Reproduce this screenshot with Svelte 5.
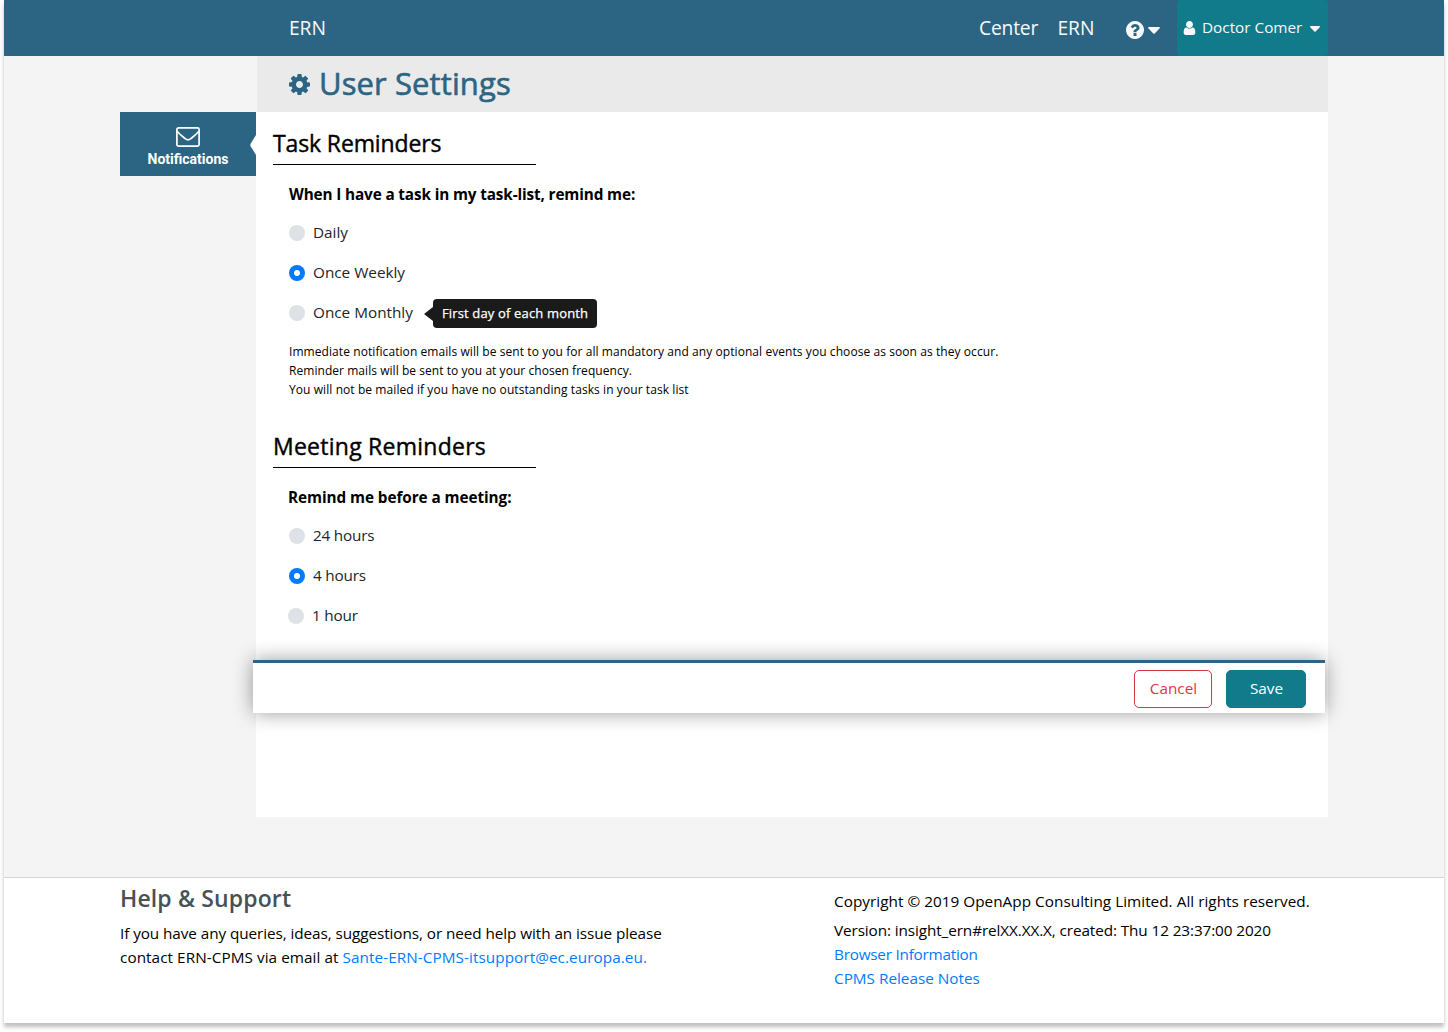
<script>
  let reminder = $state('Once Weekly');
  let meeting = $state('4 hours');
  const reminders = ['Daily', 'Once Weekly', 'Once Monthly'];
  const meetings = ['24 hours', '4 hours', '1 hour'];
</script>

{#snippet caret()}
  <svg class="caret" viewBox="0 0 12 7"><path d="M.9 0h10.2c.8 0 1.1.8.6 1.3L6.7 6.5c-.4.4-1 .4-1.4 0L.3 1.3C-.2.8.1 0 .9 0z" /></svg>
{/snippet}

<div class="page">
  <header>
    <span class="brand">ERN</span>
    <nav>
      <span class="center">Center</span>
      <span class="ern">ERN</span>
      <span class="help">
        <svg class="question" viewBox="0 128 1536 1536"><path d="M896 1376v-192q0-14-9-23t-23-9h-192q-14 0-23 9t-9 23v192q0 14 9 23t23 9h192q14 0 23-9t9-23zm256-672q0-88-55.5-163t-138.5-116-170-41q-243 0-371 213-15 24 8 42l132 100q7 6 19 6 16 0 25-12 53-68 86-92 34-24 86-24 48 0 85.5 26t37.5 59q0 38-20 61t-68 45q-63 28-115.5 86.5t-52.5 125.5v36q0 14 9 23t23 9h192q14 0 23-9t9-23q0-19 21.5-49.5t54.5-49.5q32-18 49-28.5t46-35 44.5-48 28-60.5 12.5-81zm384 192q0 209-103 385.5t-279.5 279.5-385.5 103-385.5-103-279.5-279.5-103-385.5 103-385.5 279.5-279.5 385.5-103 385.5 103 279.5 279.5 103 385.5z" /></svg>
        {@render caret()}
      </span>
      <span class="account">
        <svg class="user" viewBox="0 128 1280 1536"><path d="M1280 1399q0 109-62.5 187t-150.5 78h-854q-88 0-150.5-78t-62.5-187q0-85 8.5-160.5t31.5-152 58.5-131 94-89 134.5-34.5q131 128 313 128t313-128q76 0 134.5 34.5t94 89 58.5 131 31.5 152 8.5 160.5zm-256-887q0 159-112.5 271.5t-271.5 112.5-271.5-112.5-112.5-271.5 112.5-271.5 271.5-112.5 271.5 112.5 112.5 271.5z" /></svg>
        <span class="name">Doctor Comer</span>
        {@render caret()}
      </span>
    </nav>
  </header>

  <div class="body">
    <aside>
      <div class="tab">
        <svg class="envelope" viewBox="0 0 24 20"><rect x=".9" y=".9" width="22.2" height="18.2" rx="1.6" /><path d="M1 4.3c2.600 2.900 5.500 5.200 8.200 7.400 1.900 1.600 3.700 1.600 5.600 0 2.700-2.200 5.600-4.500 8.200-7.400" /></svg>
        <span class="tab-label">Notifications</span>
        <svg class="notch" viewBox="0 0 6 20"><path d="M6 0v20L.6 11.200q-.6-1.200 0-2.400z" /></svg>
      </div>
    </aside>
    <div class="column">
      <div class="title">
        <svg class="cog" viewBox="0 128 1536 1536"><path d="M1024 896q0-106-75-181t-181-75-181 75-75 181 75 181 181 75 181-75 75-181zm512-109v222q0 12-8 23t-20 13l-185 28q-19 54-39 91 35 50 107 138 10 12 10 25t-9 23q-27 37-99 108t-94 71q-12 0-26-9l-138-108q-44 23-91 38-16 136-29 186-7 28-36 28h-222q-14 0-24.5-8.5t-11.500-21.500l-28-184q-49-16-90-37l-141 107q-10 9-25 9-14 0-25-11-126-114-165-168-7-10-7-23 0-12 8-23 15-21 51-66.500t54-70.500q-27-50-41-99l-183-27q-13-2-21-12.500t-8-23.500v-222q0-12 8-23t19-13l186-28q14-46 39-92-40-57-107-138-10-12-10-24 0-10 9-23 26-36 98.500-107.500t94.500-71.500q13 0 26 10l138 107q44-23 91-38 16-136 29-186 7-28 36-28h222q14 0 24.500 8.500t11.500 21.500l28 184q49 16 90 37l142-107q9-9 24-9 13 0 25 10 129 119 165 170 7 8 7 22 0 12-8 23-15 21-51 66.500t-54 70.500q26 50 41 98l183 28q13 2 21 12.500t8 23.500z" /></svg>
        <h1>User Settings</h1>
      </div>
      <main>
        <section>
          <h2><span class="h-task">Task Reminders</span></h2>
          <h3><span class="q-task">When I have a task in my task-list, remind me:</span></h3>
          {#each reminders as option}
            <label>
              <input type="radio" name="reminder" value={option} bind:group={reminder} />
              <span class="option">{option}</span>
              {#if option === 'Once Monthly'}
                <span class="tip">First day of each month</span>
              {/if}
            </label>
          {/each}
          <div class="notes">
            <p class="n1">Immediate notification emails will be sent to you for all mandatory and any optional events you choose as soon as they occur.</p>
            <p class="n2">Reminder mails will be sent to you at your chosen frequency.</p>
            <p class="n3">You will not be mailed if you have no outstanding tasks in your task list</p>
          </div>
        </section>
        <section class="meeting">
          <h2><span class="h-meet">Meeting Reminders</span></h2>
          <h3><span class="q-meet">Remind me before a meeting:</span></h3>
          {#each meetings as option}
            <label>
              <input type="radio" name="meeting" value={option} bind:group={meeting} />
              <span class="option">{option}</span>
            </label>
          {/each}
        </section>
        <div class="actions">
          <button class="cancel">Cancel</button>
          <button class="save">Save</button>
        </div>
      </main>
    </div>
  </div>

  <footer>
    <div class="support">
      <h4>Help &amp; Support</h4>
      <p class="s1">If you have any queries, ideas, suggestions, or need help with an issue please</p>
      <p class="s2">contact ERN-CPMS via email at <a href="#mail">Sante-ERN-CPMS-itsupport@ec.europa.eu.</a></p>
    </div>
    <div class="legal">
      <p class="copy">Copyright © 2019 OpenApp Consulting Limited. All rights reserved.</p>
      <p class="version">Version: insight_ern#relXX.XX.X, created: Thu 12 23:37:00 2020</p>
      <p><a class="browser" href="#browser">Browser Information</a></p>
      <p><a href="#notes">CPMS Release Notes</a></p>
    </div>
  </footer>
</div>

<style>
  :global(body) { background: #fff; overflow: hidden; }
  * { box-sizing: border-box; }
  h1, h2, h3, h4, p { margin: 0; }
  svg { display: block; flex: none; fill: currentColor; }
  a { color: #007bff; text-decoration: none; }
  .page {
    display: flex; flex-direction: column;
    width: 1440px; height: 1023px; margin: 0 4px 9px;
    background: #f4f4f4; box-shadow: 0 4px 4px rgba(0, 0, 0, .25);
    font-family: "Open Sans", "Noto Sans", sans-serif; font-size: 15.3px; color: #000;
    white-space: nowrap;
  }
  header {
    display: flex; justify-content: space-between; height: 56px; flex: none;
    padding: 0 116px 0 285px; background: #2c6583; color: #f8f9fa;
    font-size: 19.3px; line-height: 56px;
  }
  nav { display: flex; }
  .center { width: 78.5px; letter-spacing: -.2px; }
  .ern { width: 68.5px; }
  .brand, .ern { letter-spacing: -.1px; }
  .help { display: flex; align-items: center; gap: 4px; width: 51px; padding-top: 4px; }
  .question { width: 18px; height: 18px; }
  .caret { width: 12px; height: 7px; }
  .account {
    display: flex; align-items: center; width: 151px; padding-left: 6px;
    background: #127b8b; border-radius: 4px; font-size: 15.3px;
  }
  .user { width: 13px; height: 14px; margin-right: 6px; }
  .name { width: 108px; padding-bottom: 2px; line-height: 54px; }
  .account .caret { width: 10px; height: 6px; margin-top: 1px; }

  .body { display: flex; height: 822px; flex: none; padding: 0 116px; border-bottom: 1px solid #d5d6d7; }
  aside { width: 136px; padding-top: 56px; }
  .tab {
    position: relative; display: flex; flex-direction: column; align-items: center;
    height: 64px; padding-top: 15px; background: #2c6583; color: #fff;
    font: 700 14px/16px Roboto, sans-serif;
  }
  .envelope { width: 24px; height: 20px; margin-bottom: 4px; fill: none; stroke: currentColor; stroke-width: 1.7; }
  .notch { position: absolute; right: 0; top: 23px; width: 6px; height: 20px; }
  .column { width: 1072px; }
  .title { display: flex; align-items: center; height: 56px; margin-left: 1px; padding-left: 32px; background: #eaeaea; color: #2c6583; }
  .cog { width: 21px; height: 21px; margin-right: 9px; }
  h1 { padding-bottom: 2px; font-size: 31px; font-weight: 500; line-height: 54px; letter-spacing: .1px; -webkit-text-stroke: .6px currentColor; }
  main { height: 705px; background: #fff; }
  section { padding: 12px 17px 0; }
  .meeting { padding-top: 28px; }
  h2 { width: 263px; height: 41px; border-bottom: 1px solid #000; font-size: 23px; font-weight: 500; line-height: 38px; -webkit-text-stroke: .4px currentColor; }
  .h-task { letter-spacing: -.13px; }
  .h-meet { letter-spacing: .25px; }
  h3 { height: 48px; margin-left: 16px; padding-top: 12px; font-size: 15.3px; font-weight: 700; line-height: 34px; }
  .q-task { letter-spacing: -.13px; }
  .q-meet { margin-left: -1px; letter-spacing: -.07px; }
  label { display: flex; align-items: center; height: 40px; margin-left: 16px; color: #212529; }
  .option { padding-bottom: 2px; }
  .meeting .option { letter-spacing: -.2px; }
  .meeting label:last-child { margin-left: 15px; }
  input {
    appearance: none; width: 16px; height: 16px; margin: 0 8px 0 0; border-radius: 50%; background: #dee2e6;
  }
  input:checked { background: radial-gradient(circle, #fff 2.7px, #007bff 3.4px); }
  .tip {
    position: relative; width: 164px; height: 29px; margin: 1px 0 0 20px; padding: 0 9px; border-radius: 4px;
    background: #1a1a1a; color: #fff; font-size: 13px; font-weight: 500; line-height: 29px;
    letter-spacing: .16px; -webkit-text-stroke: .25px currentColor;
  }
  .tip::before { content: ""; position: absolute; left: -9px; top: 8px; border: solid transparent; border-width: 7px 9px 7px 0; border-right-color: #1a1a1a; }
  .notes { margin: 9px 0 0 16px; font-size: 12px; line-height: 19px; }
  .n1 { letter-spacing: .073px; }
  .n2 { letter-spacing: .05px; }
  .n3 { letter-spacing: .08px; }
  .actions {
    position: relative; display: flex; justify-content: flex-end; gap: 14px;
    width: 1072px; height: 53px; margin: 24px 0 0 -3px; padding: 7px 19px 0 0;
    background: #fff; border-top: 3px solid #2c6583; box-shadow: 0 0 20px rgba(0, 0, 0, .4);
  }
  button { height: 38px; padding: 0 0 2px 1px; border: 1px solid #dc3545; border-radius: 5px; background: #fff; color: #dc3545; font: inherit; }
  .cancel { width: 78px; }
  .save { width: 80px; border-color: #127b8b; background: #127b8b; color: #fff; }

  footer { display: flex; flex: 1; padding: 0 116px; background: #fff; line-height: 24px; }
  .support { width: 714px; }
  h4 { height: 43px; color: #495057; font-size: 23px; font-weight: 600; line-height: 40px; letter-spacing: .14px; }
  .s1 { letter-spacing: -.078px; }
  .s2 { letter-spacing: .06px; }
  .legal { padding-top: 11px; }
  .copy { height: 29px; letter-spacing: .03px; }
  .version { letter-spacing: -.1px; }
  .browser { letter-spacing: -.23px; }
</style>
